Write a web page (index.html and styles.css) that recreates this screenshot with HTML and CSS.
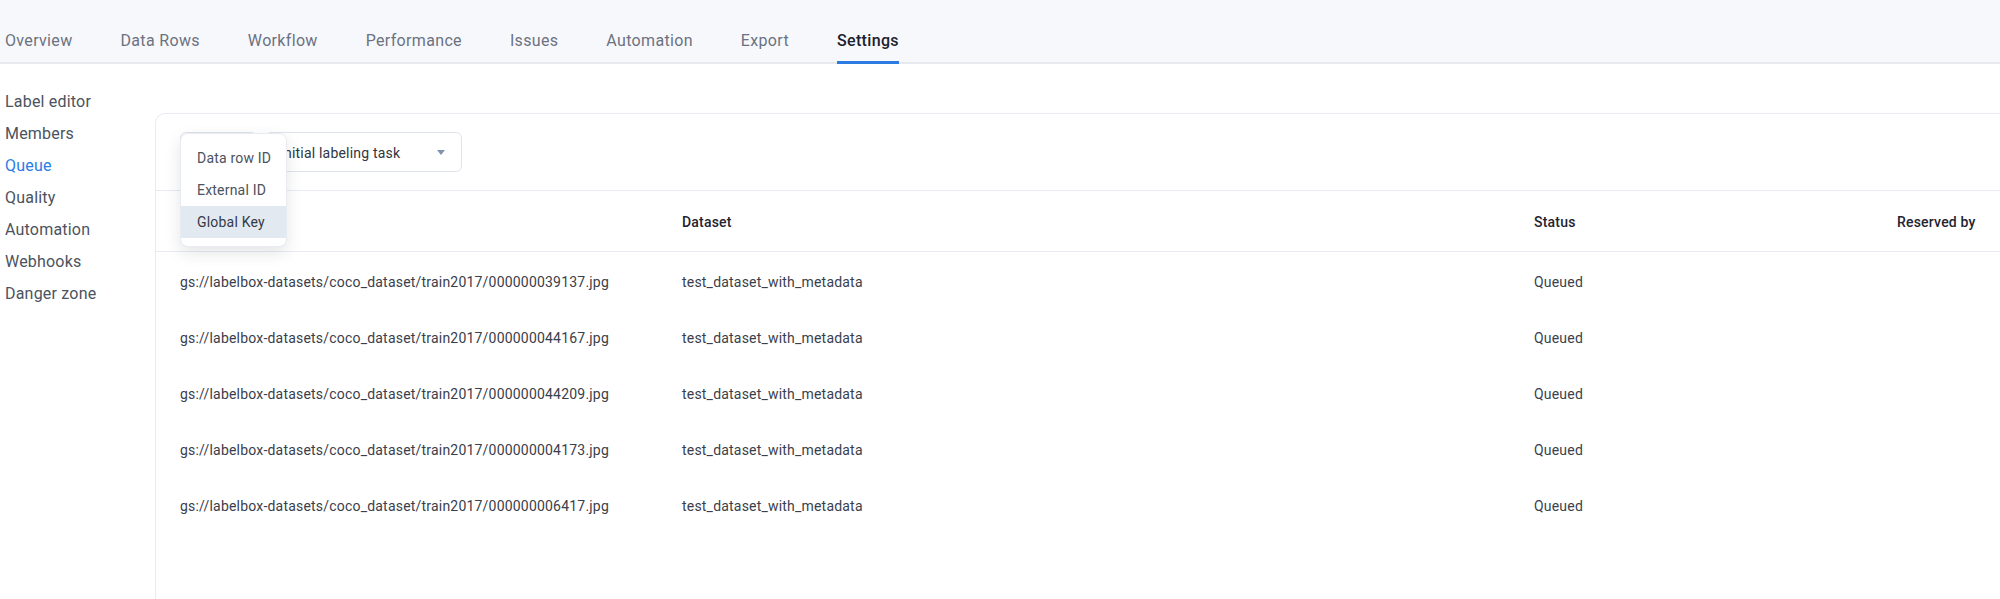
FILE: index.html
```html
<!DOCTYPE html>
<html lang="en">
<head>
<meta charset="utf-8">
<title>Queue settings</title>
<link rel="stylesheet" href="styles.css">
</head>
<body>
<nav class="topnav">
  <a class="tab">Overview</a>
  <a class="tab">Data Rows</a>
  <a class="tab">Workflow</a>
  <a class="tab">Performance</a>
  <a class="tab">Issues</a>
  <a class="tab">Automation</a>
  <a class="tab">Export</a>
  <a class="tab active">Settings</a>
</nav>
<div class="page">
  <aside class="sidebar">
    <a class="side-item">Label editor</a>
    <a class="side-item">Members</a>
    <a class="side-item active">Queue</a>
    <a class="side-item">Quality</a>
    <a class="side-item">Automation</a>
    <a class="side-item">Webhooks</a>
    <a class="side-item">Danger zone</a>
  </aside>
  <main class="content">
    <section class="card">
      <div class="toolbar">
        <div class="select-wrap">
          <div class="select first"></div>
          <ul class="menu">
            <li class="menu-item">Data row ID</li>
            <li class="menu-item">External ID</li>
            <li class="menu-item selected">Global Key</li>
          </ul>
        </div>
        <div class="select second">
          <span>Initial labeling task</span>
          <span class="caret"></span>
        </div>
      </div>
      <div class="table">
        <div class="row head">
          <div class="cell"></div>
          <div class="cell">Dataset</div>
          <div class="cell">Status</div>
          <div class="cell">Reserved by</div>
        </div>
        <div class="row">
          <div class="cell">gs://labelbox-datasets/coco_dataset/train2017/000000039137.jpg</div>
          <div class="cell">test_dataset_with_metadata</div>
          <div class="cell">Queued</div>
          <div class="cell"></div>
        </div>
        <div class="row">
          <div class="cell">gs://labelbox-datasets/coco_dataset/train2017/000000044167.jpg</div>
          <div class="cell">test_dataset_with_metadata</div>
          <div class="cell">Queued</div>
          <div class="cell"></div>
        </div>
        <div class="row">
          <div class="cell">gs://labelbox-datasets/coco_dataset/train2017/000000044209.jpg</div>
          <div class="cell">test_dataset_with_metadata</div>
          <div class="cell">Queued</div>
          <div class="cell"></div>
        </div>
        <div class="row">
          <div class="cell">gs://labelbox-datasets/coco_dataset/train2017/000000004173.jpg</div>
          <div class="cell">test_dataset_with_metadata</div>
          <div class="cell">Queued</div>
          <div class="cell"></div>
        </div>
        <div class="row">
          <div class="cell">gs://labelbox-datasets/coco_dataset/train2017/000000006417.jpg</div>
          <div class="cell">test_dataset_with_metadata</div>
          <div class="cell">Queued</div>
          <div class="cell"></div>
        </div>
      </div>
    </section>
  </main>
</div>
</body>
</html>
```

FILE: styles.css
```css
* { box-sizing: border-box; }
html, body { margin: 0; padding: 0; }
body {
  width: 2000px;
  height: 599px;
  overflow: hidden;
  background: #ffffff;
  font-family: Roboto, "Liberation Sans", sans-serif;
  letter-spacing: 0.2px;
  color: #374151;
}

.topnav {
  display: flex;
  gap: 48px;
  height: 64px;
  padding-left: 5px;
  background: #f7f8fc;
  border-bottom: 2px solid #e7eaf1;
}
.tab {
  display: block;
  font-size: 16px;
  line-height: 24px;
  letter-spacing: 0.33px;
  padding-top: 29px;
  padding-bottom: 8px;
  border-bottom: 3px solid transparent;
  margin-bottom: -2px;
  color: #6b7281;
  white-space: nowrap;
}
.tab.active {
  color: #1c212b;
  font-weight: 500;
  border-bottom-color: #2b7be0;
}

.page {
  display: flex;
}
.sidebar {
  width: 155px;
  flex: none;
  padding: 22px 0 0 5px;
  display: flex;
  flex-direction: column;
}
.side-item {
  font-size: 16px;
  line-height: 32px;
  color: #4b5360;
  white-space: nowrap;
}
.side-item.active { color: #2b7de6; }

.content {
  flex: 1;
  padding-top: 49px;
}
.card {
  height: 486px;
  border: 1px solid #e8ebf1;
  border-right: none;
  border-bottom: none;
  border-top-left-radius: 10px;
  background: #fff;
}

.toolbar {
  display: flex;
  gap: 8px;
  padding: 18px 24px;
  border-bottom: 1px solid #e8ebf1;
}
.select-wrap { position: relative; }
.select {
  height: 40px;
  border: 1px solid #dfe3ea;
  border-radius: 6px;
  display: flex;
  align-items: center;
  font-size: 14px;
  color: #2f3541;
  white-space: nowrap;
}
.select.first {
  width: 77px;
}
.select.second {
  width: 197px;
  padding: 1px 14px 0;
  justify-content: space-between;
}
.caret {
  width: 0;
  height: 0;
  border-left: 4.5px solid transparent;
  border-right: 4.5px solid transparent;
  border-top: 5px solid #8093ad;
  margin-right: 2px;
}

.menu {
  position: absolute;
  top: 1px;
  left: 0;
  z-index: 5;
  width: 107px;
  margin: 0;
  padding: 8px 0;
  list-style: none;
  background: #fff;
  border: 1px solid #e8ebf0;
  border-radius: 8px;
  box-shadow: 0 6px 16px rgba(30, 40, 60, 0.12);
}
.menu-item {
  height: 32px;
  line-height: 32px;
  padding-left: 16px;
  font-size: 14px;
  color: #4b5260;
  white-space: nowrap;
}
.menu-item.selected { background: #e3e9f1; color: #343a46; }

.table { font-size: 14px; }
.row {
  display: grid;
  grid-template-columns: 502px 852px 363px 1fr;
  padding: 3px 0 0 24px;
  height: 56px;
  align-items: center;
  color: #3a404b;
}
.row.head {
  height: 61px;
  padding-top: 2px;
  border-bottom: 1px solid #e8ebf1;
  font-weight: 500;
  color: #1f2430;
}
.cell { white-space: nowrap; }
```
